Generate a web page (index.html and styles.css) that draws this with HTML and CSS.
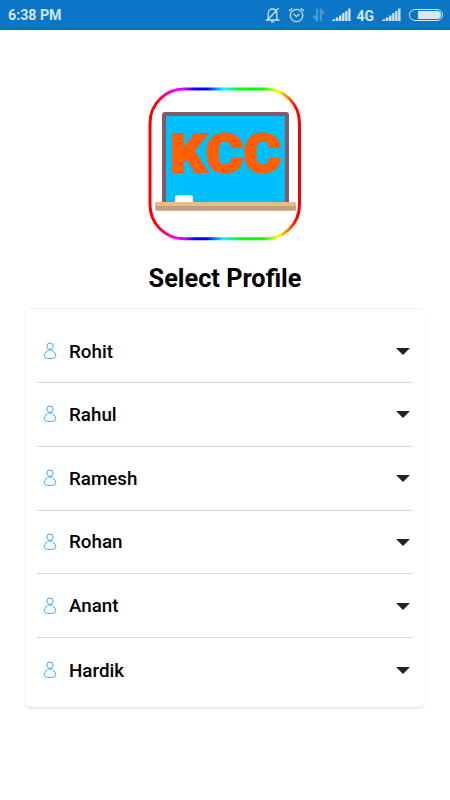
FILE: index.html
```html
<!DOCTYPE html>
<html lang="en">
<head>
    <meta charset="UTF-8">
    <meta name="viewport" content="width=device-width, initial-scale=1.0">
    <title>Select Profile</title>
    <link rel="stylesheet" href="styles.css">
</head>
<body>
    <!-- Shared icons -->
    <svg class="icon-defs">
        <symbol id="user" viewBox="0 0 14 18">
            <circle cx="7" cy="4.2" r="3.2"/>
            <path d="M4.8 8.6C2.5 9.8 1.3 12 1.2 14.5C1.2 15.8 3.6 16.5 7 16.5S12.8 15.8 12.8 14.5C12.7 12 11.5 9.8 9.2 8.6C7.9 7.7 6.1 7.7 4.8 8.6Z"/>
        </symbol>
        <symbol id="signal" viewBox="0 0 20 14">
            <path d="M0 13V12L3 11V13ZM3.7 13V9.5H6.3V13ZM7 13V7.5H9.5V13ZM10.2 13V5H12.5V13ZM13.2 13V3H15.5V13ZM16.2 13V0.5H18.5V13Z"/>
        </symbol>
    </svg>

    <!-- Status bar -->
    <header class="status-bar">
        <span class="time">6:38 PM</span>
        <div class="status-icons">
            <svg class="bell" width="16" height="16" viewBox="0 0 16 16">
                <path d="M3.2 11.8V6.5C3.2 3.8 5 2 7.5 2S11.8 3.8 11.8 6.5V11.8L13.5 13H1.8L3.2 11.8M6 14.8H9.3M1.5 14L13.8 1"/>
            </svg>
            <svg class="alarm" width="17" height="16" viewBox="0 0 17 16">
                <circle cx="8.5" cy="8.5" r="6.2"/>
                <path d="M5.6 7L8.5 9.4L11.5 7M1 4L4.3 1.2M16 4L12.7 1.2"/>
            </svg>
            <svg class="data" width="14" height="14" viewBox="0 0 14 14">
                <path d="M5 1V12L1.5 8M8.8 13V2L12.3 6"/>
            </svg>
            <svg class="signal" width="20" height="14"><use href="#signal"/></svg>
            <span class="network">4G</span>
            <svg class="signal" width="20" height="14"><use href="#signal"/></svg>
            <div class="battery"><span></span></div>
        </div>
    </header>

    <main class="content">
        <svg class="logo" width="170" height="170" viewBox="0 0 170 170">
            <defs>
                <linearGradient id="rainbow" gradientUnits="userSpaceOnUse" x1="9" y1="0" x2="161" y2="0">
                    <stop offset="0.05" stop-color="#ff0000"/>
                    <stop offset="0.17" stop-color="#ff00ff"/>
                    <stop offset="0.23" stop-color="#d800ff"/>
                    <stop offset="0.31" stop-color="#0000ff"/>
                    <stop offset="0.38" stop-color="#0000ff"/>
                    <stop offset="0.49" stop-color="#00ffff"/>
                    <stop offset="0.62" stop-color="#00ff00"/>
                    <stop offset="0.74" stop-color="#00ff00"/>
                    <stop offset="0.85" stop-color="#ffff00"/>
                    <stop offset="0.97" stop-color="#ff0000"/>
                </linearGradient>
            </defs>
            <rect x="10" y="9" width="149.5" height="149.7" rx="34" fill="#fff" stroke="url(#rainbow)" stroke-width="3"/>
            <!-- Blackboard -->
            <path d="M22 122V35Q22 32 25 32H146Q149 32 149 35V122Z" fill="#805b66"/>
            <rect x="26" y="36" width="119" height="86" fill="#00bfff"/>
            <text class="logo-text" x="30" y="92.3" textLength="111" lengthAdjust="spacingAndGlyphs">KCC</text>
            <!-- Chalk and tray -->
            <path d="M35 122V117Q35 115.3 37 115.3H51Q53 115.3 53 117V122Z" fill="#fff"/>
            <rect x="15.3" y="122" width="140.7" height="8.7" rx="1.5" fill="#c79d7b"/>
            <path d="M15.3 126V123.5Q15.3 122 17 122H154.5Q156 122 156 123.5V126Z" fill="#e6bd87"/>
        </svg>

        <h1>Select Profile</h1>

        <!-- Profile list -->
        <div class="card">
            <div class="profile">
                <svg class="user" width="14" height="18"><use href="#user"/></svg>
                <span class="name">Rohit</span>
                <span class="arrow"></span>
            </div>
            <div class="profile">
                <svg class="user" width="14" height="18"><use href="#user"/></svg>
                <span class="name">Rahul</span>
                <span class="arrow"></span>
            </div>
            <div class="profile">
                <svg class="user" width="14" height="18"><use href="#user"/></svg>
                <span class="name">Ramesh</span>
                <span class="arrow"></span>
            </div>
            <div class="profile">
                <svg class="user" width="14" height="18"><use href="#user"/></svg>
                <span class="name">Rohan</span>
                <span class="arrow"></span>
            </div>
            <div class="profile">
                <svg class="user" width="14" height="18"><use href="#user"/></svg>
                <span class="name">Anant</span>
                <span class="arrow"></span>
            </div>
            <div class="profile">
                <svg class="user" width="14" height="18"><use href="#user"/></svg>
                <span class="name">Hardik</span>
                <span class="arrow"></span>
            </div>
        </div>
    </main>
</body>
</html>
```
FILE: styles.css
```css
* {
    margin: 0;
    padding: 0;
    box-sizing: border-box;
}

body {
    min-height: 100vh;
    background-color: #fff;
    color: #000;
    font-family: Roboto, sans-serif;
}

.icon-defs {
    display: none;
}

/* Status bar */
.status-bar {
    display: flex;
    justify-content: space-between;
    align-items: center;
    height: 30px;
    padding: 1px 7px 0 8px;
    background-color: #0b76c5;
    border-bottom: 1px solid #0768b7;
    color: #d3e7f6;
    font-size: 14px;
    font-weight: 700;
}

.time {
    font-size: 14.2px;
}

.status-icons {
    display: flex;
    align-items: center;
}

.bell,
.alarm,
.data {
    fill: none;
    stroke: #c7e0f3;
    stroke-width: 1.3;
}

.bell {
    margin-right: 7px;
}

.alarm {
    margin-right: 7px;
}

.data {
    margin-right: 6px;
    stroke: #4a9ad8;
    stroke-width: 2;
}

.signal {
    fill: #d3e7f6;
}

.network {
    margin: 1px 8px 0 4px;
}

.battery {
    width: 34px;
    height: 12px;
    margin-left: 7px;
    padding: 1px 1px 1px 8px;
    border: 1px solid #d3e7f6;
    border-radius: 6px;
}

.battery span {
    display: block;
    height: 8px;
    background-color: #d3e7f6;
    border-radius: 0 4px 4px 0;
}

/* Main content */
.content {
    display: flex;
    flex-direction: column;
    align-items: center;
    padding-top: 50px;
}

.logo {
    display: block;
}

.logo-text {
    font-family: Roboto, sans-serif;
    font-size: 53px;
    font-weight: 900;
    fill: #ff5f00;
    stroke: #ff5f00;
    stroke-width: 2;
}

h1 {
    margin: 13px 0 14px;
    font-size: 25.3px;
    font-weight: 700;
    line-height: 31px;
}

/* Profile list */
.card {
    width: 400px;
    height: 399px;
    padding: 11px 13px 11px 12px;
    background-color: #fff;
    border-radius: 6px;
    border-top: 1px solid #f0f0f0;
    box-shadow: 0 2px 2px rgba(0, 0, 0, 0.09), 0 0 1px rgba(0, 0, 0, 0.06);
}

.profile {
    display: flex;
    align-items: center;
    height: 63.8px;
    padding: 0 2px 0 6px;
    border-bottom: 1px solid #d8d8d8;
}

.profile:first-child {
    height: 63px;
}

.profile:last-child {
    border-bottom: none;
}

.user {
    fill: none;
    stroke: #42a5f5;
    stroke-width: 1;
}

.name {
    flex: 1;
    margin-left: 12px;
    padding-top: 1px;
    font-size: 18.8px;
    font-weight: 500;
}

.arrow {
    margin-top: 1px;
    border-left: 7px solid transparent;
    border-right: 7px solid transparent;
    border-top: 7px solid #222;
}
```
